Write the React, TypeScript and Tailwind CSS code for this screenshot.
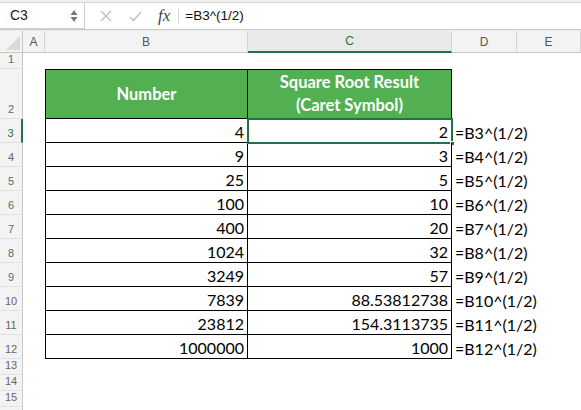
import React from "react";

const rows: [string, string, string][] = [
  ["4", "2", "=B3^(1/2)"],
  ["9", "3", "=B4^(1/2)"],
  ["25", "5", "=B5^(1/2)"],
  ["100", "10", "=B6^(1/2)"],
  ["400", "20", "=B7^(1/2)"],
  ["1024", "32", "=B8^(1/2)"],
  ["3249", "57", "=B9^(1/2)"],
  ["7839", "88.53812738", "=B10^(1/2)"],
  ["23812", "154.3113735", "=B11^(1/2)"],
  ["1000000", "1000", "=B12^(1/2)"],
];

const cellFont = { fontFamily: "Lato, 'Open Sans', sans-serif" };

const RowHead = ({ n, active }: { n?: number; active?: boolean }) => (
  <div
    className={
      "flex items-end justify-center pb-[1px] bg-[#f3f3f3] border-b border-[#e1e1e1] text-[11px] " +
      (active
        ? "text-[#217346] border-r-2 border-r-[#217346]"
        : "text-[#666] border-r border-r-[#c8c8c8]")
    }
    style={{ fontFamily: "'Liberation Sans', Arial, sans-serif" }}
  >
    {n}
  </div>
);

const Empty = () => <div />;

export default function App() {
  return (
    <div className="w-[581px] h-[410px] overflow-hidden bg-white">
      {/* Formula bar */}
      <div className="h-[2px] bg-[#f1f1f1]" />
      <div className="flex items-stretch h-[27px] bg-white border-t border-[#d6d6d6]">
        <div className="w-[85px] flex items-center justify-between pl-[10px] pr-[6px] border-r border-b border-[#cfcfcf]">
          <span
            className="text-[14px] text-[#222]"
            style={{ fontFamily: "'Liberation Sans', Arial, sans-serif" }}
          >
            C3
          </span>
          <svg width="8" height="16" viewBox="0 0 8 16">
            <path d="M4 2 L7.5 7 L0.5 7 Z" fill="#777" />
            <path d="M4 14 L7.5 9 L0.5 9 Z" fill="#777" />
          </svg>
        </div>
        <div className="flex items-center pl-[15px]">
          <svg width="12" height="12" viewBox="0 0 12 12" className="mr-[17px]">
            <path d="M1 1 L11 11 M11 1 L1 11" stroke="#c4c4c4" strokeWidth="1.6" />
          </svg>
          <svg width="13" height="11" viewBox="0 0 13 11" className="mr-[16px]">
            <path d="M1 6 L4.5 9.5 L12 1" stroke="#c4c4c4" strokeWidth="1.6" fill="none" />
          </svg>
          <span
            className="italic text-[17px] text-[#444] mr-[8px]"
            style={{ fontFamily: "'Liberation Serif', 'Times New Roman', serif" }}
          >
            fx
          </span>
          <div className="w-px h-[14px] bg-[#d4d4d4] mr-[6px]" />
          <span
            className="text-[13.5px] text-[#111]"
            style={{ fontFamily: "'Liberation Sans', Arial, sans-serif" }}
          >
            =B3^(1/2)
          </span>
        </div>
      </div>
      <div className="h-[2px] bg-[#ececec] border-t border-[#c9c9c9]" />

      {/* Sheet */}
      <div className="grid grid-cols-[23px_22px_203px_204px_65px_1fr] grid-rows-[22px_16px_50px_repeat(10,24px)_repeat(4,16px)]">
        {/* Column headers */}
        <div className="bg-[#f3f3f3] border-r border-b border-[#c8c8c8] relative overflow-hidden">
          <svg width="14" height="14" viewBox="0 0 14 14" className="absolute right-[2px] bottom-[2px]">
            <path d="M14 0 L14 14 L0 14 Z" fill="#d9d9d9" />
          </svg>
        </div>
        {["A", "B", "C", "D", "E"].map((c) => (
          <div
            key={c}
            className={
              "flex items-center justify-center text-[12px] border-r border-[#d4d4d4] " +
              (c === "C"
                ? "bg-[#e9e9e9] text-[#217346] border-b-2 border-b-[#217346]"
                : "bg-[#f3f3f3] text-[#555] border-b border-b-[#c8c8c8]")
            }
            style={{ fontFamily: "'Liberation Sans', Arial, sans-serif" }}
          >
            {c}
          </div>
        ))}

        {/* Row 1 */}
        <RowHead n={1} />
        <Empty />
        <Empty />
        <Empty />
        <Empty />
        <Empty />

        {/* Row 2: table header */}
        <RowHead n={2} />
        <Empty />
        <div
          className="bg-[#52b052] border border-black flex items-center justify-center text-white font-bold text-[16.5px]"
          style={cellFont}
        >
          Number
        </div>
        <div
          className="bg-[#52b052] border-y border-r border-black flex flex-col items-center justify-center text-white font-bold text-[16.5px] leading-[23px]"
          style={cellFont}
        >
          <span>Square Root Result</span>
          <span>(Caret Symbol)</span>
        </div>
        <Empty />
        <Empty />

        {/* Data rows */}
        {rows.map(([b, c, d], i) => (
          <React.Fragment key={i}>
            <RowHead n={i + 3} active={i === 0} />
            <Empty />
            <div
              className="border-x border-b border-black flex items-end justify-end pr-[3px] text-[16px] text-black leading-[21px]"
              style={cellFont}
            >
              {b}
            </div>
            <div
              className="border-r border-b border-black relative flex items-end justify-end pr-[3px] text-[16px] text-black leading-[21px]"
              style={cellFont}
            >
              {c}
              {i === 0 && (
                <>
                  <div className="absolute left-[-1px] top-[-1px] right-[-2px] bottom-[-2px] border-2 border-[#217346] pointer-events-none" />
                  <div className="absolute right-[-4px] bottom-[-4px] w-[5px] h-[5px] bg-[#217346] border border-white" />
                </>
              )}
            </div>
            <div
              className="col-span-2 flex items-end pl-[3px] text-[16px] text-black leading-[21px] whitespace-nowrap"
              style={cellFont}
            >
              {d}
            </div>
          </React.Fragment>
        ))}

        {[13, 14, 15, 0].map((n) => (
          <React.Fragment key={n}>
            <RowHead n={n || undefined} />
            <Empty />
            <Empty />
            <Empty />
            <Empty />
            <Empty />
          </React.Fragment>
        ))}
      </div>
    </div>
  );
}
